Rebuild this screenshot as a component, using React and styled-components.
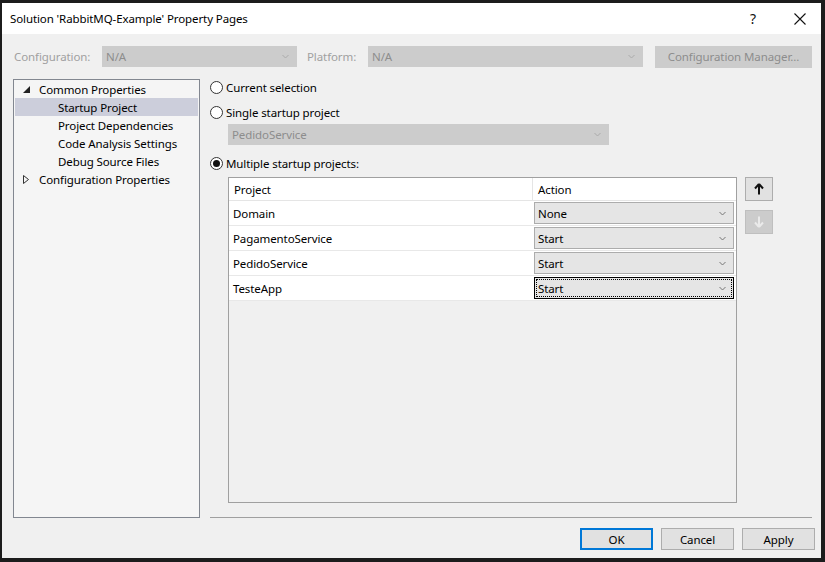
import React from "react";
import styled, { createGlobalStyle } from "styled-components";

const Global = createGlobalStyle`
  html, body { margin: 0; padding: 0; background: #1c1c1c; }
  body { width: 825px; height: 562px; overflow: hidden; }
  * { box-sizing: border-box; }
`;

const FONT = `"Segoe UI", "Noto Sans", "Open Sans", sans-serif`;

const Window = styled.div`
  margin: 3px 4px 4px 2px;
  width: 819px;
  height: 555px;
  background: #f0f0f0;
  display: flex;
  flex-direction: column;
  font-family: ${FONT};
  font-size: 11.5px;
  letter-spacing: -0.1px;
  color: #000;
`;

const TitleBar = styled.div`
  height: 31px;
  background: #fff;
  display: flex;
  align-items: center;
  padding-left: 8px;
`;

const Title = styled.div`
  flex: 1;
`;

const TitleButton = styled.div`
  width: ${(p) => p.$w}px;
  display: flex;
  justify-content: center;
  align-items: center;
  font-size: 14px;
  color: #111;
`;

const Body = styled.div`
  flex: 1;
  display: flex;
  flex-direction: column;
  padding: 12px 6px 0 11px;
`;

const ConfigRow = styled.div`
  display: flex;
  align-items: center;
  height: 21px;
`;

const DimLabel = styled.span`
  color: #a0a0a0;
  width: ${(p) => p.$w}px;
  padding-left: ${(p) => p.$pl || 0}px;
  white-space: nowrap;
`;

const Combo = styled.div`
  width: ${(p) => p.$w}px;
  height: ${(p) => p.$h || 21}px;
  margin-left: ${(p) => p.$ml || 0}px;
  background: ${(p) => (p.$disabled ? "#cccccc" : "#e5e5e5")};
  border: 1px solid ${(p) => (p.$focus ? "#000" : p.$disabled ? "#cccccc" : "#acacac")};
  outline: ${(p) => (p.$focus ? "1px dotted #000" : "none")};
  outline-offset: -3px;
  display: flex;
  align-items: center;
  padding: 0 7px 0 3px;
  color: ${(p) => (p.$disabled ? "#8d8d8d" : "#000")};
`;

const ComboText = styled.span`
  flex: 1;
`;

const Chevron = ({ color = "#777" }) => (
  <svg width="7" height="5" viewBox="0 0 7 5">
    <path d="M0.5 1 L3.5 4 L6.5 1" fill="none" stroke={color} strokeWidth="1" />
  </svg>
);

const Button = styled.div`
  width: ${(p) => p.$w}px;
  height: 22px;
  margin-left: ${(p) => p.$ml || 0}px;
  display: flex;
  align-items: center;
  justify-content: center;
  background: ${(p) => (p.$disabled ? "#cccccc" : "#e1e1e1")};
  border: ${(p) =>
    p.$default ? "2px solid #0078d7" : p.$disabled ? "1px solid #cccccc" : "1px solid #adadad"};
  color: ${(p) => (p.$disabled ? "#8d8d8d" : "#000")};
`;

const Main = styled.div`
  display: flex;
  margin-top: 12px;
  height: 439px;
`;

const Tree = styled.div`
  width: 187px;
  border: 1px solid #828790;
  background: #f5f5f5;
  display: flex;
  flex-direction: column;
`;

const TreeRow = styled.div`
  height: 18px;
  display: flex;
  align-items: center;
  padding-left: ${(p) => p.$indent}px;
  margin: 0 1px;
  background: ${(p) => (p.$selected ? "#cccedb" : "transparent")};
`;

const Twisty = styled.span`
  width: 16px;
  display: flex;
  align-items: center;
`;

const RightPanel = styled.div`
  width: 602px;
  margin-left: 10px;
  border-bottom: 1px solid #a0a0a0;
  display: flex;
  flex-direction: column;
`;

const RadioRow = styled.div`
  display: flex;
  align-items: center;
  height: 16px;
  margin-top: ${(p) => p.$mt}px;
`;

const RadioCircle = styled.span`
  width: 13px;
  height: 13px;
  border-radius: 50%;
  border: 1px solid #333;
  background: #fff;
  margin-right: 3px;
  display: flex;
  align-items: center;
  justify-content: center;
  &::after {
    content: "";
    display: ${(p) => (p.$checked ? "block" : "none")};
    width: 7px;
    height: 7px;
    border-radius: 50%;
    background: #111;
  }
`;

const IndentBlock = styled.div`
  padding-left: 18px;
  margin-top: ${(p) => p.$mt || 0}px;
`;

const GridRow = styled.div`
  display: flex;
  margin-top: 6px;
  padding-left: 18px;
`;

const Grid = styled.div`
  width: 509px;
  height: 326px;
  border: 1px solid #a0a0a0;
  background: #f0f0f0;
  display: flex;
  flex-direction: column;
`;

const GridHeader = styled.div`
  display: grid;
  grid-template-columns: 304px 1fr;
  height: 23px;
  background: #fff;
  border-bottom: 1px solid #e5e5e5;
`;

const HeaderCell = styled.div`
  display: flex;
  align-items: center;
  padding-left: ${(p) => p.$pl}px;
  border-right: ${(p) => (p.$sep ? "1px solid #e5e5e5" : "none")};
`;

const DataRow = styled.div`
  display: grid;
  grid-template-columns: 304px 1fr;
  height: 25px;
  background: #fff;
  border-bottom: 1px solid #e8e8e8;
`;

const NameCell = styled.div`
  display: flex;
  align-items: center;
  padding-left: 4px;
`;

const ActionCell = styled.div`
  display: flex;
  align-items: center;
  padding-left: 1px;
`;

const SideButtons = styled.div`
  display: flex;
  flex-direction: column;
  gap: 9px;
  margin-left: 8px;
`;

const ArrowButton = styled.div`
  width: 28px;
  height: 24px;
  display: flex;
  align-items: center;
  justify-content: center;
  background: ${(p) => (p.$disabled ? "#cccccc" : "#e1e1e1")};
  border: 1px solid ${(p) => (p.$disabled ? "#bfbfbf" : "#adadad")};
`;

const Footer = styled.div`
  display: flex;
  justify-content: flex-end;
  padding-top: 10px;
`;

const Arrow = ({ down, color }) => (
  <svg width="10" height="12" viewBox="0 0 10 12" style={{ transform: down ? "rotate(180deg)" : "none" }}>
    <path d="M5 1 L1 5.5 M5 1 L9 5.5 M5 1 L5 11.5" fill="none" stroke={color} strokeWidth="2" />
  </svg>
);

const rows = [
  ["Domain", "None"],
  ["PagamentoService", "Start"],
  ["PedidoService", "Start"],
  ["TesteApp", "Start"],
];

export default function App() {
  return (
    <>
      <Global />
      <Window>
        <TitleBar>
          <Title>Solution 'RabbitMQ-Example' Property Pages</Title>
          <TitleButton $w={52}>?</TitleButton>
          <TitleButton $w={42}>
            <svg width="12" height="12" viewBox="0 0 12 12">
              <path d="M0.5 0.5 L11.5 11.5 M11.5 0.5 L0.5 11.5" stroke="#111" strokeWidth="1.1" />
            </svg>
          </TitleButton>
        </TitleBar>
        <Body>
          <ConfigRow>
            <DimLabel $w={89} $pl={1}>Configuration:</DimLabel>
            <Combo $w={195} $disabled>
              <ComboText>N/A</ComboText>
              <Chevron color="#aaa" />
            </Combo>
            <DimLabel $w={71} $pl={10}>Platform:</DimLabel>
            <Combo $w={275} $disabled>
              <ComboText>N/A</ComboText>
              <Chevron color="#aaa" />
            </Combo>
            <Button $w={157} $ml={12} $disabled>Configuration Manager...</Button>
          </ConfigRow>
          <Main>
            <Tree>
              <TreeRow $indent={8}>
                <Twisty>
                  <svg width="7" height="7" viewBox="0 0 7 7"><path d="M7 0 L7 7 L0 7 Z" fill="#222" /></svg>
                </Twisty>
                Common Properties
              </TreeRow>
              <TreeRow $indent={43} $selected>Startup Project</TreeRow>
              <TreeRow $indent={43}>Project Dependencies</TreeRow>
              <TreeRow $indent={43}>Code Analysis Settings</TreeRow>
              <TreeRow $indent={43}>Debug Source Files</TreeRow>
              <TreeRow $indent={8}>
                <Twisty>
                  <svg width="6" height="9" viewBox="0 0 6 9"><path d="M0.5 0.5 L5.5 4.5 L0.5 8.5 Z" fill="none" stroke="#333" /></svg>
                </Twisty>
                Configuration Properties
              </TreeRow>
            </Tree>
            <RightPanel>
              <RadioRow $mt={0}>
                <RadioCircle />
                Current selection
              </RadioRow>
              <RadioRow $mt={9}>
                <RadioCircle />
                Single startup project
              </RadioRow>
              <IndentBlock $mt={4}>
                <Combo $w={381} $disabled>
                  <ComboText>PedidoService</ComboText>
                  <Chevron color="#aaa" />
                </Combo>
              </IndentBlock>
              <RadioRow $mt={10}>
                <RadioCircle $checked />
                Multiple startup projects:
              </RadioRow>
              <GridRow>
                <Grid>
                  <GridHeader>
                    <HeaderCell $pl={5} $sep>Project</HeaderCell>
                    <HeaderCell $pl={5}>Action</HeaderCell>
                  </GridHeader>
                  {rows.map(([name, action], i) => (
                    <DataRow key={name}>
                      <NameCell>{name}</NameCell>
                      <ActionCell>
                        <Combo $w={200} $h={22} $focus={i === rows.length - 1}>
                          <ComboText>{action}</ComboText>
                          <Chevron />
                        </Combo>
                      </ActionCell>
                    </DataRow>
                  ))}
                </Grid>
                <SideButtons>
                  <ArrowButton>
                    <Arrow color="#111" />
                  </ArrowButton>
                  <ArrowButton $disabled>
                    <Arrow down color="#eaeaea" />
                  </ArrowButton>
                </SideButtons>
              </GridRow>
            </RightPanel>
          </Main>
          <Footer>
            <Button $w={73} $default>OK</Button>
            <Button $w={73} $ml={8}>Cancel</Button>
            <Button $w={73} $ml={8}>Apply</Button>
          </Footer>
        </Body>
      </Window>
    </>
  );
}
